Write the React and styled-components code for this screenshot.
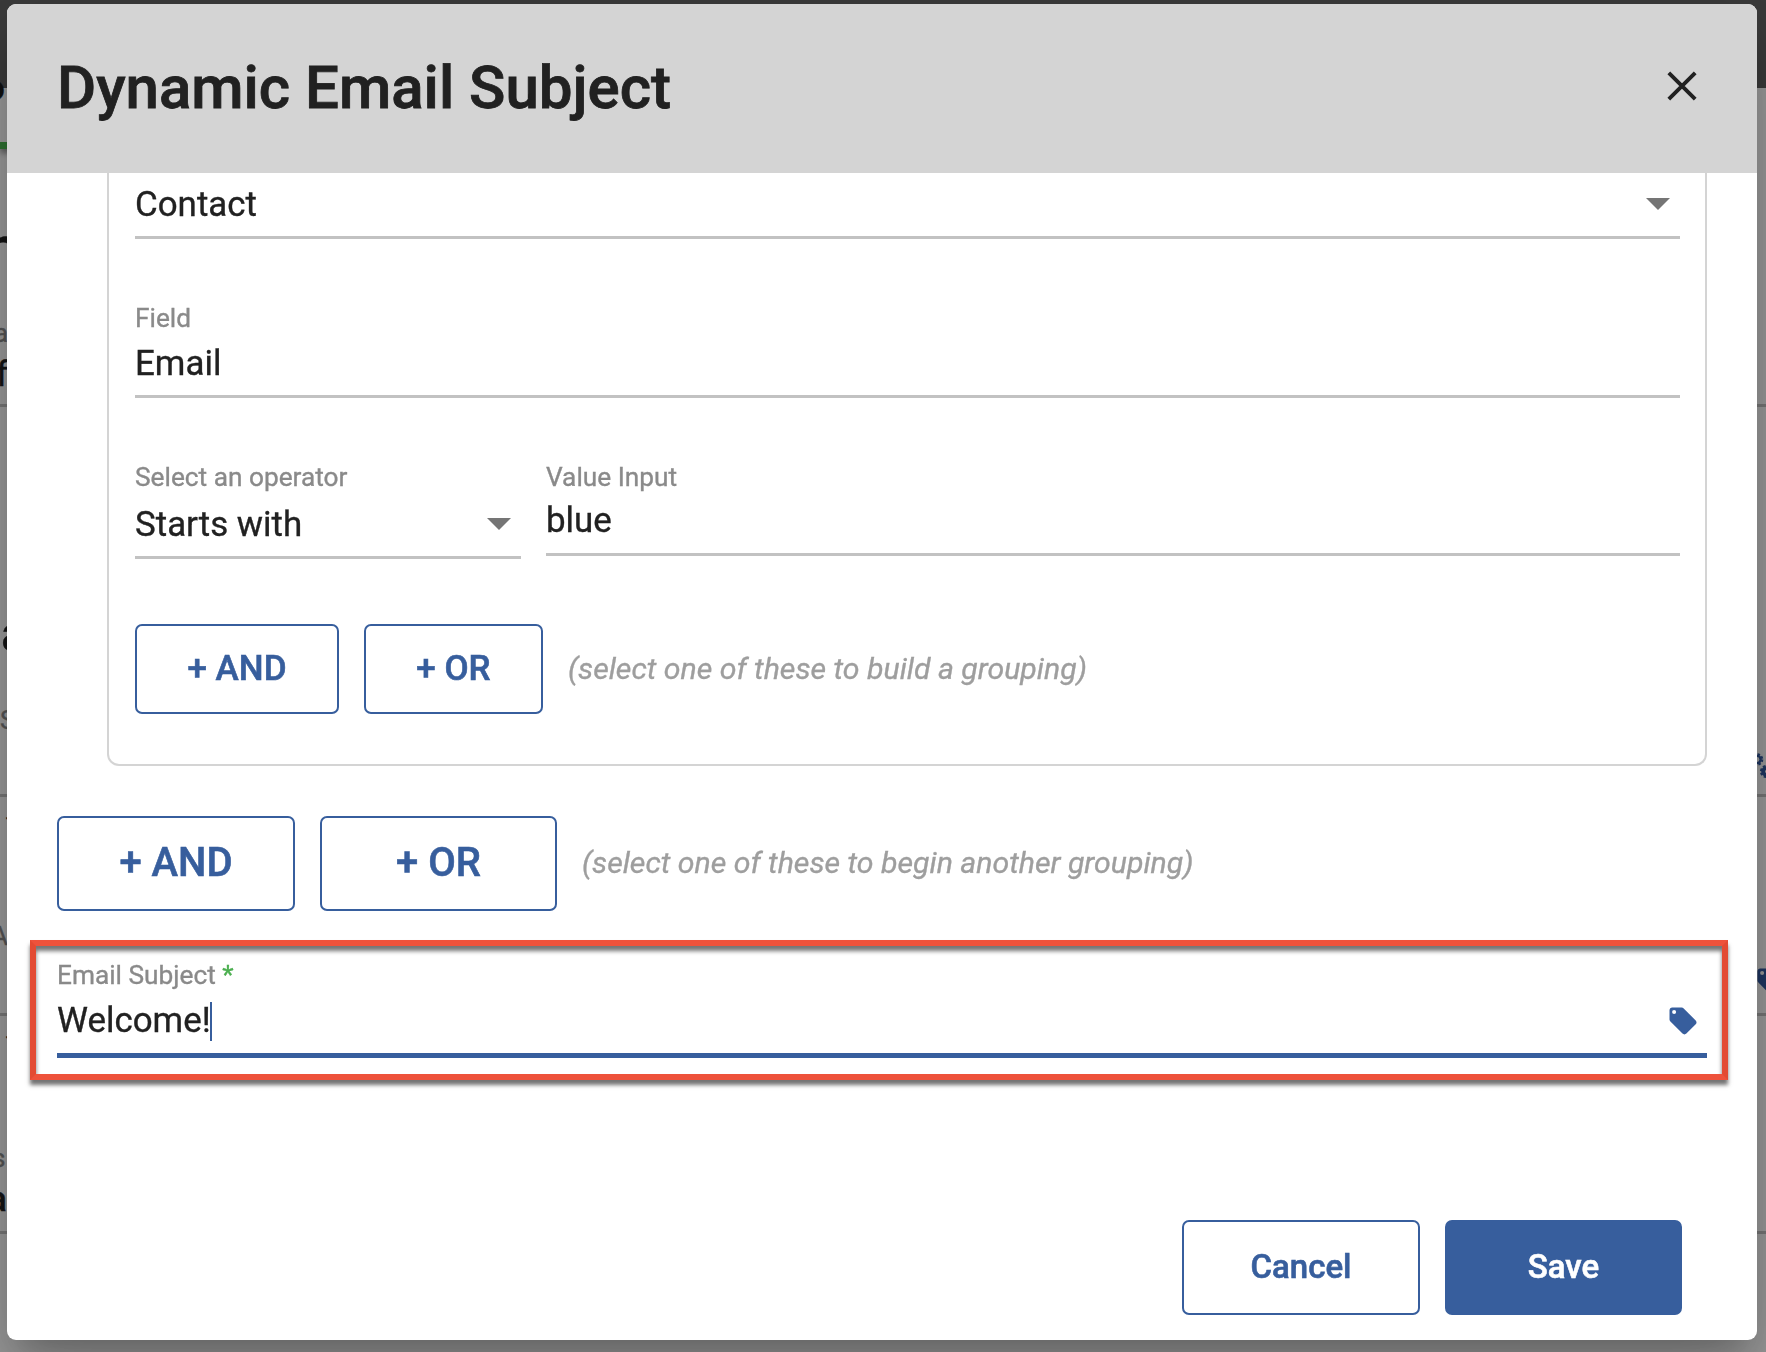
import React from 'react';
import styled, { createGlobalStyle } from 'styled-components';

const BLUE = '#375e9d';

function TagIcon({ size = 28, color = BLUE }) {
  return (
    <Icon width={size} height={size} viewBox="0 0 28 28">
      <path
        fill={color}
        fillRule="evenodd"
        d="M3.2 0.5H12.6C13.4 0.5 14.1 0.8 14.7 1.4L26.7 13.4C27.8 14.5 27.8 16.1 26.7 17.2L17.4 26.6C16.3 27.7 14.6 27.7 13.5 26.6L1.4 14.6C0.8 14 0.5 13.3 0.5 12.5V3.2C0.5 1.7 1.7 0.5 3.2 0.5ZM5.1 3.1A2 2 0 1 0 5.1 7.1A2 2 0 1 0 5.1 3.1Z"
      />
    </Icon>
  );
}

function GearsIcon() {
  return (
    <Icon width="32" height="28" viewBox="0 0 32 28">
      <g fill="none" stroke="#1f3763">
        <circle cx="4" cy="8.5" r="3.6" strokeWidth="2.4" />
        <circle cx="4" cy="8.5" r="5.2" strokeWidth="2.2" strokeDasharray="2.4 1.68" />
        <circle cx="13.5" cy="20.5" r="3.4" strokeWidth="3.8" />
        <circle cx="13.5" cy="20.5" r="5.4" strokeWidth="2.4" strokeDasharray="2.6 1.64" />
      </g>
    </Icon>
  );
}

function PageBehind() {
  return (
    <Page>
      <Toolbar />
      <Tab>o</Tab>
      <PageText size={60} height={100} top={49} left={-14} weight={500}>n</PageText>
      <PageText size={26} height={30} top={20} left={-6} muted>a</PageText>
      <PageText size={35} height={53} left={-4}>f</PageText>
      <PageLine top={3} />
      <PageText size={50} height={60} top={197} left={1} weight={500}>a</PageText>
      <PageText size={26} height={30} top={41} muted>S</PageText>
      <PageSlot height={59}><GearsIcon /></PageSlot>
      <PageLine />
      <PageText size={22} height={42} left={6}>-</PageText>
      <PageText size={26} height={30} top={82} left={-9} muted>A</PageText>
      <PageSlot height={62}><TagIcon color="#1f3763" /></PageSlot>
      <PageLine />
      <PageText size={22} height={42} left={6}>-</PageText>
      <PageText size={26} height={30} top={85} left={-8} muted>s</PageText>
      <PageText size={35} height={54} left={-12} weight={500}>a</PageText>
      <PageLine top={4} />
    </Page>
  );
}

function App() {
  return (
    <>
      <GlobalStyle />
      <PageBehind />
      <Modal>
        <Header>
          <Title>Dynamic Email Subject</Title>
          <Close width="30" height="30" viewBox="0 0 30 30">
            <path d="M1.8 1.8L28.2 28.2M28.2 1.8L1.8 28.2" stroke="#212121" strokeWidth="3.9" />
          </Close>
        </Header>
        <Body>
          <Group>
            <Select>
              <Value height={46} line={48}>Contact</Value>
              <Arrow />
            </Select>
            <Field top={62}>
              <Label>Field</Label>
              <Value height={60} line={57}>Email</Value>
            </Field>
            <Operators>
              <Operator>
                <Label>Select an operator</Label>
                <ValueRow>
                  <Value height={62} line={61}>Starts with</Value>
                  <Arrow />
                </ValueRow>
              </Operator>
              <Field grow>
                <Label>Value Input</Label>
                <Value height={59} line={54}>blue</Value>
              </Field>
            </Operators>
            <Actions top={65}>
              <Button width={204} height={90} size={35}>+ AND</Button>
              <Button width={179} height={90} size={35}>+ OR</Button>
              <Hint>(select one of these to build a grouping)</Hint>
            </Actions>
          </Group>
          <Actions top={50} indent>
            <Button width={238} height={95} size={40}>+ AND</Button>
            <Button width={237} height={95} size={40}>+ OR</Button>
            <Hint>(select one of these to begin another grouping)</Hint>
          </Actions>
          <Highlight>
            <SubjectField>
              <Label>Email Subject <Required>*</Required></Label>
              <SubjectRow>
                <Value height={61} line={57}>Welcome!</Value>
                <Caret />
                <TagIcon />
              </SubjectRow>
            </SubjectField>
          </Highlight>
        </Body>
        <Footer>
          <Button width={238} height={95} size={33}>Cancel</Button>
          <Button width={237} height={95} size={33} primary>Save</Button>
        </Footer>
      </Modal>
    </>
  );
}

export default App;

const GlobalStyle = createGlobalStyle`
  * {
    box-sizing: border-box;
  }
  body {
    margin: 0;
    overflow: hidden;
    font-family: Roboto, "Liberation Sans", sans-serif;
    color: #212121;
    -webkit-text-stroke-width: 0.35px;
  }
`
const Icon = styled.svg`
  display: block;
  flex: none;
`

/* page under the modal */
const Page = styled.div`
  height: 1352px;
  overflow: hidden;
  background-color: #9c9c9c;
`
const Toolbar = styled.div`
  height: 88px;
  background-color: #3b3b3b;
`
const Tab = styled.div`
  width: 200px;
  height: 61px;
  border-bottom: 7px solid #2f7332;
  box-shadow: 0 4px 6px rgba(0, 0, 0, 0.4);
  font-size: 35px;
  font-weight: 500;
  line-height: 1px;
  text-indent: -15px;
  color: #111;
`
const PageText = styled.div.withConfig({
  shouldForwardProp: (prop) => !['size', 'height', 'top', 'left', 'weight', 'muted'].includes(prop)
})`
  margin-top: ${({ top = 0 }) => top}px;
  text-indent: ${({ left = 0 }) => left}px;
  font-size: ${({ size }) => size}px;
  font-weight: ${({ weight = 400 }) => weight};
  line-height: ${({ height }) => height}px;
  color: ${({ muted }) => (muted ? '#555' : '#141414')};
`
const PageSlot = styled.div.withConfig({
  shouldForwardProp: (prop) => prop !== 'height'
})`
  display: flex;
  justify-content: flex-end;
  align-items: center;
  height: ${({ height }) => height}px;
  margin-right: -19px;
`
const PageLine = styled.div.withConfig({
  shouldForwardProp: (prop) => prop !== 'top'
})`
  height: 3px;
  margin-top: ${({ top = 0 }) => top}px;
  background-color: #787878;
`

/* modal */
const Modal = styled.div`
  position: fixed;
  top: 4px;
  left: 7px;
  display: flex;
  flex-direction: column;
  width: 1750px;
  height: 1336px;
  background-color: #fff;
  border-radius: 9px;
  box-shadow: 0 22px 30px -14px rgba(0, 0, 0, 0.2), 0 48px 76px 6px rgba(0, 0, 0, 0.14), 0 18px 92px 16px rgba(0, 0, 0, 0.12);
`
const Header = styled.div`
  display: flex;
  align-items: center;
  justify-content: space-between;
  height: 169px;
  padding: 0 60px 0 50px;
  background-color: #d4d4d4;
  border-radius: 9px 9px 0 0;
`
const Title = styled.h1`
  margin: -1px 0 0;
  font-size: 60px;
  font-weight: 500;
  line-height: 80px;
  -webkit-text-stroke-width: 0.8px;
`
const Close = styled(Icon)`
  margin-top: -5px;
`
const Body = styled.div`
  flex: 1;
`
const Group = styled.div`
  height: 593px;
  margin: 0 50px 0 100px;
  padding: 8px 25px 0 26px;
  border: 2px solid #d4d4d4;
  border-top: none;
  border-radius: 0 0 12px 12px;
`
const Field = styled.div.withConfig({
  shouldForwardProp: (prop) => !['top', 'grow'].includes(prop)
})`
  flex: ${({ grow }) => (grow ? 1 : 'none')};
  margin-top: ${({ top = 0 }) => top}px;
  border-bottom: 3px solid #c2c2c2;
`
const Select = styled.div`
  display: flex;
  align-items: center;
  justify-content: space-between;
  height: 58px;
  padding-bottom: 9px;
  border-bottom: 3px solid #c2c2c2;
`
const Operator = styled.div`
  width: 386px;
  border-bottom: 3px solid #c2c2c2;
`
const ValueRow = styled.div`
  display: flex;
  align-items: center;
  justify-content: space-between;
`
const Operators = styled.div`
  display: flex;
  align-items: flex-start;
  gap: 25px;
  margin-top: 62px;
`
const Label = styled.div`
  font-size: 26.25px;
  line-height: 34px;
  color: #8a8a8a;
`
const Value = styled.div.withConfig({
  shouldForwardProp: (prop) => !['height', 'line'].includes(prop)
})`
  height: ${({ height }) => height}px;
  font-size: 34.9px;
  line-height: ${({ line }) => line}px;
`
const Arrow = styled.div`
  margin: 0 10px 0 0;
  border: 12px solid transparent;
  border-top-color: #757575;
  border-bottom: none;

  ${ValueRow} & {
    margin-bottom: 2px;
  }
`
const Actions = styled.div.withConfig({
  shouldForwardProp: (prop) => !['top', 'indent'].includes(prop)
})`
  display: flex;
  align-items: center;
  gap: 25px;
  margin-top: ${({ top }) => top}px;
  margin-left: ${({ indent }) => (indent ? 50 : 0)}px;
`
const Button = styled.button.withConfig({
  shouldForwardProp: (prop) => !['width', 'height', 'size', 'primary'].includes(prop)
})`
  width: ${({ width }) => width}px;
  height: ${({ height }) => height}px;
  padding: 0 0 2px;
  font-family: inherit;
  font-size: ${({ size }) => size}px;
  font-weight: 500;
  -webkit-text-stroke-width: 0.6px;
  color: ${({ primary }) => (primary ? '#fff' : BLUE)};
  background-color: ${({ primary }) => (primary ? BLUE : '#fff')};
  border: 2px solid ${BLUE};
  border-radius: 7px;
`
const Hint = styled.span`
  margin-bottom: 2px;
  font-size: 30.25px;
  font-style: italic;
  color: #9e9e9e;
`
const Highlight = styled.div`
  width: 1698px;
  height: 140px;
  margin: 29px 0 0 23px;
  padding: 12px 15px 0 21px;
  border: 6px solid;
  border-color: #ee523b #e34b33;
  box-shadow: 0 5px 4px rgba(0, 0, 0, 0.55), inset 0 5px 4px rgba(0, 0, 0, 0.55);
`
const SubjectField = styled.div`
  height: 100px;
  border-bottom: 5px solid ${BLUE};
`
const Required = styled.span`
  color: #4caf50;
`
const SubjectRow = styled.div`
  display: flex;
  align-items: center;

  ${Icon} {
    margin: -4px 10px 0 auto;
  }
`
const Caret = styled.div`
  width: 2px;
  height: 39px;
  margin: -2px 0 0 -1px;
  background-color: ${BLUE};
`
const Footer = styled.div`
  display: flex;
  justify-content: flex-end;
  gap: 25px;
  padding: 0 75px 25px 0;
`
